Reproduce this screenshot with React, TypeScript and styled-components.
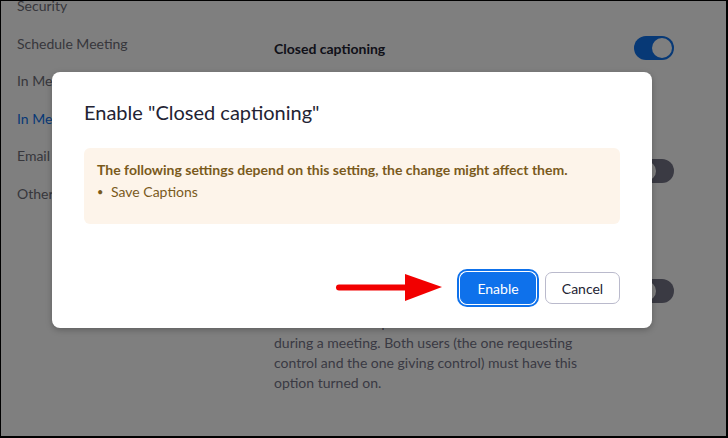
import React from "react";
import styled, { createGlobalStyle } from "styled-components";

const GlobalStyle = createGlobalStyle`
  html, body {
    margin: 0;
    padding: 0;
    background: #000;
  }
  body {
    font-family: Lato, "Open Sans", sans-serif;
    color: #232333;
  }
`;

const Frame = styled.div`
  width: 728px;
  height: 438px;
  box-sizing: border-box;
  border-style: solid;
  border-color: #000;
  border-width: 1px 2px 2px 1px;
  position: relative;
  overflow: hidden;
  background: #fff;
`;

const Page = styled.div`
  display: flex;
  height: 100%;
`;

const Sidebar = styled.ul`
  list-style: none;
  margin: -5px 0 0;
  padding: 0 0 0 16px;
  width: 273px;
  box-sizing: border-box;
`;

const NavItem = styled.li<{ $active?: boolean }>`
  height: 37.6px;
  font-size: 14px;
  line-height: 20px;
  color: ${(p) => (p.$active ? "#0e72ed" : "#6e6e78")};
  white-space: nowrap;
`;

const Main = styled.div`
  width: 400px;
  padding-top: 35px;
  display: flex;
  flex-direction: column;
`;

const Setting = styled.div<{ $gap: number }>`
  margin-bottom: ${(p) => p.$gap}px;
`;

const SettingHead = styled.div`
  display: flex;
  align-items: center;
  justify-content: space-between;
  height: 24px;
`;

const SettingTitle = styled.div`
  font-size: 14px;
  font-weight: 700;
  color: #232333;
`;

const Description = styled.p`
  margin: 10px 0 0;
  font-size: 14px;
  line-height: 20px;
  color: #747487;
  width: 310px;
`;

const Toggle = styled.span<{ $on?: boolean }>`
  width: 40px;
  height: 24px;
  border-radius: 12px;
  background: ${(p) => (p.$on ? "#0e72ed" : "#747487")};
  display: flex;
  align-items: center;
  justify-content: ${(p) => (p.$on ? "flex-end" : "flex-start")};
  padding: 2px;
  box-sizing: border-box;

  &::after {
    content: "";
    width: 20px;
    height: 20px;
    border-radius: 50%;
    background: #fff;
  }
`;

const Overlay = styled.div`
  position: absolute;
  inset: 0;
  background: rgba(0, 0, 0, 0.5);
  display: flex;
  align-items: flex-start;
  padding: 71px 0 0 51px;
`;

const Modal = styled.div`
  width: 600px;
  height: 256px;
  box-sizing: border-box;
  background: #fff;
  border-radius: 8px;
  box-shadow: 0 2px 6px rgba(0, 0, 0, 0.25);
  padding: 26px 32px 0;
  display: flex;
  flex-direction: column;
`;

const Title = styled.h2`
  margin: 0;
  font-size: 20px;
  line-height: 28px;
  font-weight: 400;
  color: #232333;
`;

const Notice = styled.div`
  margin-top: 22px;
  background: #fdf4ea;
  border-radius: 6px;
  padding: 11px 13px 22px;
  font-size: 14px;
  line-height: 20px;
  color: #7a5a1c;
`;

const NoticeLead = styled.div`
  font-weight: 700;
  line-height: 21px;
`;

const NoticeList = styled.ul`
  margin: 2px 0 0;
  padding: 0 0 0 14px;
  list-style: none;

  li {
    position: relative;
  }

  li::before {
    content: "•";
    position: absolute;
    left: -14px;
    font-size: 11px;
  }
`;

const Footer = styled.div`
  margin-top: 48px;
  display: flex;
  align-items: center;
  justify-content: flex-end;
  gap: 9px;
`;

const Arrow = styled.svg`
  margin-right: 6px;
`;

const Button = styled.button<{ $primary?: boolean }>`
  height: 32px;
  padding: 0;
  width: ${(p) => (p.$primary ? 76 : 75)}px;
  border-radius: 7px;
  font-family: Lato, sans-serif;
  font-size: 14px;
  cursor: pointer;
  border: 1px solid ${(p) => (p.$primary ? "#0e71eb" : "#babacc")};
  background: ${(p) => (p.$primary ? "#0e71eb" : "#fff")};
  color: ${(p) => (p.$primary ? "#fff" : "#232333")};
  box-shadow: ${(p) =>
    p.$primary ? "0 0 0 1px #fff, 0 0 0 3px #0e71eb" : "none"};
`;

const navItems = [
  "Security",
  "Schedule Meeting",
  "In Meeting (Basic)",
  "In Meeting (Advanced)",
  "Email Notification",
  "Other",
];

export default function App() {
  return (
    <Frame>
      <GlobalStyle />
      <Page>
        <Sidebar>
          {navItems.map((item, i) => (
            <NavItem key={item} $active={i === 3}>
              {item}
            </NavItem>
          ))}
        </Sidebar>
        <Main>
          <Setting $gap={99}>
            <SettingHead>
              <SettingTitle>Closed captioning</SettingTitle>
              <Toggle $on />
            </SettingHead>
          </Setting>
          <Setting $gap={96}>
            <SettingHead>
              <SettingTitle>Save Captions</SettingTitle>
              <Toggle />
            </SettingHead>
          </Setting>
          <Setting $gap={0}>
            <SettingHead>
              <SettingTitle>Remote control</SettingTitle>
              <Toggle />
            </SettingHead>
            <Description>
              Allow users to request remote control
              <br />
              during a meeting. Both users (the one requesting control and the
              one giving control) must have this option turned on.
            </Description>
          </Setting>
        </Main>
      </Page>
      <Overlay>
        <Modal>
          <Title>Enable "Closed captioning"</Title>
          <Notice>
            <NoticeLead>
              The following settings depend on this setting, the change might
              affect them.
            </NoticeLead>
            <NoticeList>
              <li>Save Captions</li>
            </NoticeList>
          </Notice>
          <Footer>
            <Arrow width="110" height="30" viewBox="0 0 110 30">
              <path d="M4 11.5 H74 V17.5 H4 A3 3 0 0 1 4 11.5 Z" fill="#f20000" />
              <polygon points="70,1 107,14 70,28" fill="#f20000" />
            </Arrow>
            <Button $primary>Enable</Button>
            <Button>Cancel</Button>
          </Footer>
        </Modal>
      </Overlay>
    </Frame>
  );
}
